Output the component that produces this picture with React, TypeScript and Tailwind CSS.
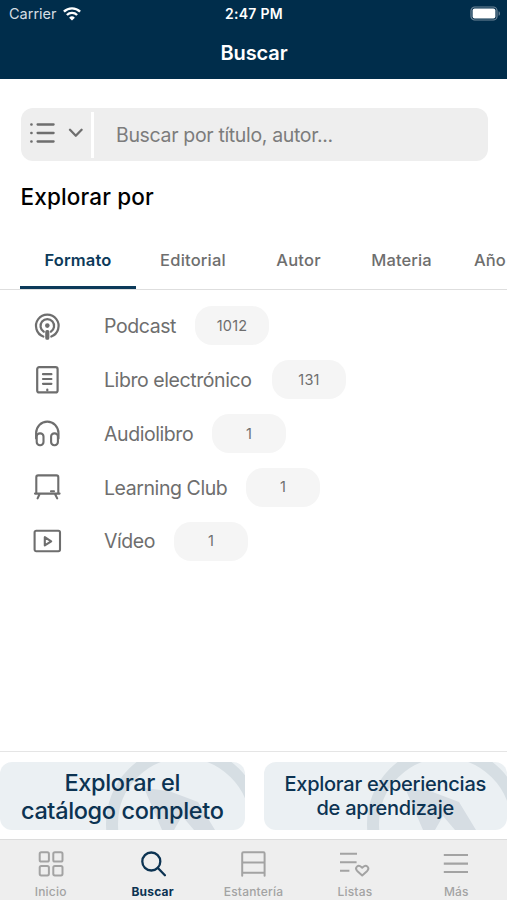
import React from "react";
import clsx from "clsx";

type IconProps = { className?: string };

const stroke = {
    fill: "none",
    stroke: "currentColor",
    strokeLinecap: "round",
    strokeLinejoin: "round",
} as const;

const WifiIcon = () => (
    <svg width="18" height="14" viewBox="0 0 18 14" fill="none" stroke="white" strokeWidth="2.4">
        <path d="M0.9 4.7a11.6 11.6 0 0 1 16.2 0" />
        <path d="M3.9 8a7.3 7.3 0 0 1 10.2 0" />
        <path d="M9 13.6 6.1 10.7a4.2 4.2 0 0 1 5.8 0Z" fill="white" stroke="none" />
    </svg>
);

const BatteryIcon = () => (
    <svg width="31" height="15" viewBox="0 0 31 15" fill="none">
        <rect x="1" y="1" width="26" height="13" rx="3.8" stroke="#6f8799" strokeWidth="1.2" />
        <rect x="2.6" y="2.6" width="22.8" height="9.8" rx="2" fill="white" />
        <path d="M28.6 5.2c1.8.7 1.8 3.9 0 4.6Z" fill="#6f8799" />
    </svg>
);

const ListIcon = () => (
    <svg width="26" height="22" viewBox="0 0 26 22" {...stroke} strokeWidth="2.3">
        <path d="M8.6 2.5h16M8.6 11h16M8.6 19.5h16" />
        <path d="M2.4 2.5h.1M2.4 11h.1M2.4 19.5h.1" strokeWidth="2.6" />
    </svg>
);

const ChevronIcon = () => (
    <svg width="15" height="10" viewBox="0 0 15 10" {...stroke} strokeWidth="2.3">
        <path d="m2 1.8 5.8 5.9 5.8-5.9" />
    </svg>
);

const PodcastIcon = ({ className }: IconProps) => (
    <svg className={className} width="30" height="30" viewBox="0 0 30 30" {...stroke} strokeWidth="2.2">
        <path d="M11.3 25.5a11.3 11.3 0 1 1 8 0" />
        <path d="M11.8 20.7a6.8 6.8 0 1 1 7 0" />
        <circle cx="15.3" cy="14.6" r="2.3" fill="currentColor" stroke="none" />
        <rect x="13.9" y="19.6" width="2.8" height="8.6" rx="1.2" fill="currentColor" strokeWidth="1.3" />
    </svg>
);

const EbookIcon = ({ className }: IconProps) => (
    <svg className={className} width="30" height="30" viewBox="0 0 30 30" {...stroke} strokeWidth="2.2">
        <rect x="5.2" y="2.2" width="20.4" height="25.2" rx="2" />
        <path d="M11 9.2h8.4M11 14h8.4M11 18.8h8.4M15.3 24.6v.8" />
    </svg>
);

const HeadphonesIcon = ({ className }: IconProps) => (
    <svg className={className} width="30" height="30" viewBox="0 0 30 30" {...stroke} strokeWidth="2.1">
        <path d="M4.1 20.5v-5.2a11.2 11.7 0 0 1 22.4 0v5.2" />
        <rect x="4.7" y="15.4" width="6.8" height="11.8" rx="3.2" />
        <rect x="19.1" y="15.4" width="6.8" height="11.8" rx="3.2" />
    </svg>
);

const BoardIcon = ({ className }: IconProps) => (
    <svg className={className} width="30" height="30" viewBox="0 0 30 30" {...stroke} strokeWidth="2.1">
        <path d="M4.3 20.8V5.2q0-1.8 1.8-1.8h18.4q1.8 0 1.8 1.8v15.6" />
        <path d="M3 21.6h24.6M7.6 22l-2 4.4M23 22l2.2 4.4" />
        <path d="M19 19.2h3" />
    </svg>
);

const VideoIcon = ({ className }: IconProps) => (
    <svg className={className} width="30" height="30" viewBox="0 0 30 30" {...stroke} strokeWidth="2.1">
        <rect x="2.6" y="4.8" width="25.4" height="20.4" rx="1.6" />
        <path d="M12.8 11.2v8.2l6.4-4.1Z" />
    </svg>
);

const HomeIcon = () => (
    <svg width="26" height="26" viewBox="0 0 26 26" {...stroke} strokeWidth="2">
        <rect x="1.7" y="1.2" width="9.2" height="9.4" rx="1.6" />
        <rect x="15.3" y="1.2" width="9.2" height="9.4" rx="1.6" />
        <rect x="1.7" y="15" width="9.2" height="9.4" rx="1.6" />
        <rect x="15.3" y="15" width="9.2" height="9.4" rx="1.6" />
    </svg>
);

const SearchIcon = () => (
    <svg width="26" height="26" viewBox="0 0 26 26" {...stroke} strokeWidth="2.3">
        <circle cx="11.3" cy="10.5" r="9" />
        <path d="m17.9 17 7 7.2" />
    </svg>
);

const ShelfIcon = () => (
    <svg width="26" height="26" viewBox="0 0 26 26" {...stroke} strokeWidth="2">
        <path d="M2.2 24.8V2.4q0-1.2 1.2-1.2h20q1.2 0 1.2 1.2v22.4M2.2 11.6h22.4M2.2 21.8h22.4" />
    </svg>
);

const ListsIcon = () => (
    <svg width="30" height="26" viewBox="0 0 30 26" {...stroke} strokeWidth="2" strokeLinecap="butt">
        <path d="M0 2.7h17M0 11.2h16.6M0 19.7h9.4" />
        <path d="m22.2 24.5-5-4.6c-2.9-3 .9-7 4.1-4l.9.9.9-.9c3.2-3 7 1 4.1 4Z" />
    </svg>
);

const MoreIcon = () => (
    <svg width="26" height="26" viewBox="0 0 26 26" {...stroke} strokeWidth="2.2" strokeLinecap="butt">
        <path d="M.8 4H25M.8 12.6H25M.8 21H25" />
    </svg>
);

// Compass watermark behind the call-to-action buttons
const Compass = ({ className }: IconProps) => (
    <svg className={className} width="148" height="68" viewBox="0 0 148 68">
        <circle cx="83" cy="62" r="72" fill="none" stroke="#d6dee3" strokeWidth="12" />
        <path d="M43 26 68 29 97 40 114 68H93L81 54 73 68H61Z" fill="#d6dde3" />
    </svg>
);

const tabs = [
    { label: "Formato", style: "w-[116px] tracking-[0.15px]" },
    { label: "Editorial", style: "w-[114px] tracking-[0.2px]" },
    { label: "Autor", style: "w-[97px] tracking-[0.2px]" },
    { label: "Materia", style: "w-[109px] tracking-[0.1px]" },
    { label: "Año", style: "w-[68px] tracking-[0.1px]" },
];

const formats = [
    { label: "Podcast", count: 1012, Icon: PodcastIcon, width: "w-[91px]" },
    { label: "Libro electrónico", count: 131, Icon: EbookIcon, width: "w-[168px]" },
    { label: "Audiolibro", count: 1, Icon: HeadphonesIcon, width: "w-[108px]" },
    { label: "Learning Club", count: 1, Icon: BoardIcon, width: "w-[142px]" },
    { label: "Vídeo", count: 1, Icon: VideoIcon, width: "w-[70px]" },
];

const navItems = [
    { label: "Inicio", Icon: HomeIcon },
    { label: "Buscar", Icon: SearchIcon },
    { label: "Estantería", Icon: ShelfIcon },
    { label: "Listas", Icon: ListsIcon },
    { label: "Más", Icon: MoreIcon },
];

export default function App() {
    const [activeTab, setActiveTab] = React.useState("Formato");
    const [activeNav, setActiveNav] = React.useState("Buscar");

    return <div className="flex h-[900px] w-[507px] flex-col overflow-hidden bg-white font-['Inter','Liberation_Sans',sans-serif] text-[#6e6e6e]">
        <header className="h-[79px] shrink-0 bg-[#002d4b] text-white">
            <div className="grid h-[27px] grid-cols-3 items-center">
                <div className="flex items-center gap-[6px] pl-[9px] text-[14.5px] text-[#d5dde3]">
                    Carrier <WifiIcon />
                </div>
                <div className="pl-px text-center text-[14px] font-semibold tracking-[0.3px]">2:47 PM</div>
                <div className="flex justify-end pr-[6px]"><BatteryIcon /></div>
            </div>
            <h1 className="pt-[11px] pl-px text-center text-[20px] leading-[30px] font-semibold tracking-[-0.1px]">Buscar</h1>
        </header>

        <main className="flex-1">
            <div className="mr-[19px] ml-[20.5px] mt-[29px] flex h-[53px] items-center rounded-[12px] bg-[#eeeeee] pl-[8.5px]">
                <button className="flex w-[62px] items-center gap-[13px] pb-[3px]">
                    <ListIcon />
                    <ChevronIcon />
                </button>
                <div className="h-[46px] w-[3px] bg-white" />
                <span className="pt-[2px] pl-[22px] text-[19.5px] tracking-[-0.34px] text-[#7c7c7c]">Buscar por título, autor...</span>
            </div>
            <h2 className="mt-[21px] pl-[20.5px] text-[22.5px] leading-[30px] font-medium tracking-[0.15px] text-black">Explorar por</h2>

            <div className="mt-[17px] flex h-[61px] overflow-hidden border-b border-[#dedede] pl-[20px]">
                {tabs.map(({ label, style }) => (
                    <button
                        key={label}
                        onClick={() => setActiveTab(label)}
                        className={clsx(
                            "h-[60px] shrink-0 border-b-[3px] pt-[5px] text-[16.5px] font-medium",
                            style,
                            activeTab === label ? "border-[#0c3a5a] font-semibold text-[#0c3a5a]" : "border-transparent"
                        )}
                    >
                        {label}
                    </button>
                ))}
            </div>

            <ul className="pt-[9px]">
                {formats.map(({ label, count, Icon, width }) => (
                    <li key={label} className="flex h-[53.8px] items-center pl-[32px]">
                        <Icon className="mr-[42px] shrink-0" />
                        <span className={clsx("shrink-0 pt-[2px] text-[19.5px] tracking-[-0.42px] whitespace-nowrap", width)}>{label}</span>
                        <span className="flex h-[39px] w-[74px] items-center justify-center rounded-[17px] bg-[#f5f5f5] text-[14.5px] tracking-[0.2px]">{count}</span>
                    </li>
                ))}
            </ul>
        </main>

        <div className="flex h-[88px] shrink-0 gap-[19px] border-t border-[#e5e5e5] pt-[10px] font-medium text-[#0c3352]">
            <button className="relative h-[68px] w-[244.5px] overflow-hidden rounded-[12px] bg-[#ebf0f3] text-[23.5px] leading-[28.5px] tracking-[-0.35px]">
                <Compass className="absolute top-0 left-[101px]" />
                <span className="relative top-px">Explorar el<br />catálogo completo</span>
            </button>
            <button className="relative h-[68px] w-[243.5px] overflow-hidden rounded-[12px] bg-[#ebf0f3] text-[20px] leading-[24.5px] tracking-[-0.25px]">
                <Compass className="absolute top-0 left-[98px]" />
                <span className="relative">Explorar experiencias<br />de aprendizaje</span>
            </button>
        </div>

        <nav className="grid h-[61px] shrink-0 grid-cols-5 border-t border-[#dcdcdc] bg-[#eeeeee]">
            {navItems.map(({ label, Icon }) => (
                <button
                    key={label}
                    onClick={() => setActiveNav(label)}
                    className={clsx(
                        "flex flex-col items-center pt-[11px] text-[12px] tracking-[0.2px]",
                        activeNav === label ? "pl-px font-bold text-[#0c3352]" : "font-medium text-[#a3a3a3]"
                    )}
                >
                    <Icon />
                    <span className="mt-[6px] leading-[18px]">{label}</span>
                </button>
            ))}
        </nav>
    </div>;
}
